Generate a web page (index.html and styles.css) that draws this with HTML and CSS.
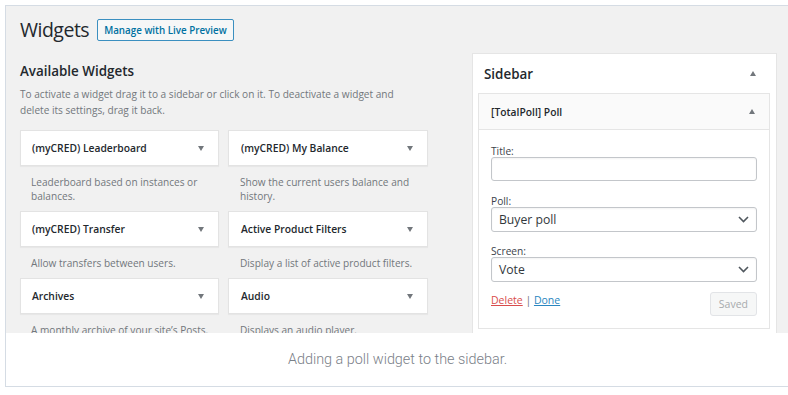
FILE: index.html
```html
<!DOCTYPE html>
<html>
<head>
<meta charset="utf-8">
<link rel="stylesheet" href="styles.css">
</head>
<body>
<figure class="frame">
  <div class="shot">
    <div class="head">
      <h1 class="title">Widgets</h1>
      <span class="live-btn">Manage with Live Preview</span>
    </div>
    <div class="main">
      <div class="available">
        <h2 class="avail-title">Available Widgets</h2>
        <p class="avail-desc">To activate a widget drag it to a sidebar or click on it. To deactivate a widget and delete its settings, drag it back.</p>
        <div class="grid">
          <div class="item">
            <div class="card"><span>(myCRED) Leaderboard</span><i class="down"></i></div>
            <p class="desc">Leaderboard based on instances or balances.</p>
          </div>
          <div class="item">
            <div class="card"><span>(myCRED) My Balance</span><i class="down"></i></div>
            <p class="desc">Show the current users balance and history.</p>
          </div>
          <div class="item">
            <div class="card"><span>(myCRED) Transfer</span><i class="down"></i></div>
            <p class="desc">Allow transfers between users.</p>
          </div>
          <div class="item">
            <div class="card"><span>Active Product Filters</span><i class="down"></i></div>
            <p class="desc">Display a list of active product filters.</p>
          </div>
          <div class="item">
            <div class="card"><span>Archives</span><i class="down"></i></div>
            <p class="desc">A monthly archive of your site’s Posts.</p>
          </div>
          <div class="item">
            <div class="card"><span>Audio</span><i class="down"></i></div>
            <p class="desc">Displays an audio player.</p>
          </div>
        </div>
      </div>
      <div class="sidebar">
        <div class="sb-head"><span>Sidebar</span><i class="up"></i></div>
        <div class="widget">
          <div class="w-head"><span>[TotalPoll] Poll</span><i class="up"></i></div>
          <div class="w-body">
            <label class="lbl">Title:</label>
            <div class="input"></div>
            <label class="lbl">Poll:</label>
            <div class="select"><span>Buyer poll</span><svg width="11" height="7" viewBox="0 0 11 7"><path d="M1 1l4.5 4.5L10 1" fill="none" stroke="#50575e" stroke-width="1.6"/></svg></div>
            <label class="lbl">Screen:</label>
            <div class="select"><span>Vote</span><svg width="11" height="7" viewBox="0 0 11 7"><path d="M1 1l4.5 4.5L10 1" fill="none" stroke="#50575e" stroke-width="1.6"/></svg></div>
            <div class="actions">
              <div class="links"><a class="del">Delete</a> | <a class="done">Done</a></div>
              <span class="saved">Saved</span>
            </div>
          </div>
        </div>
      </div>
    </div>
  </div>
  <figcaption class="caption">Adding a poll widget to the sidebar.</figcaption>
</figure>
</body>
</html>
```
FILE: styles.css
```css
html, body { margin: 0; padding: 0; background: #fff; overflow: hidden; }
body { width: 788px; height: 395px; }
.frame {
  margin: 5px 0 0 5px;
  width: 783px;
  border: 1px solid #d5dce4;
  background: #fff;
}
.shot {
  height: 327px;
  overflow: hidden;
  background: #f1f1f1;
  font-family: "Open Sans", sans-serif;
  color: #23282d;
  padding-top: 13px;
  box-sizing: border-box;
}
.head { display: flex; align-items: center; height: 22px; padding-left: 14px; gap: 8px; }
.title { margin: 0; font-size: 19.5px; font-weight: 400; letter-spacing: -0.5px; line-height: 22px; color: #23282d; }
.live-btn {
  display: flex; align-items: center; height: 20px; padding: 0 6px;
  border: 1px solid #3b8fc0; border-radius: 2px; background: #f6f7f7;
  color: #0071a1; font-size: 9.8px; font-weight: 600;
}
.main { display: flex; margin-top: 12px; }
.available { width: 408px; padding: 8px 0 0 14px; }
.avail-title { margin: 0; font-size: 13.4px; font-weight: 600; line-height: 20px; }
.avail-desc { margin: 5px 0 12px; width: 385px; font-size: 10.1px; line-height: 16px; color: #72777c; }
.grid { display: grid; grid-template-columns: 199px 200px; column-gap: 9px; }
.card {
  height: 36px; box-sizing: border-box; background: #fff; border: 1px solid #e3e3e3;
  display: flex; align-items: center; justify-content: space-between;
  padding: 0 14px 0 11px; font-size: 10.3px; font-weight: 600; color: #23282d;
  box-shadow: 0 1px 1px rgba(0,0,0,0.04);
}
.item:nth-child(even) .card { padding-left: 12px; }
.desc { margin: 9px 0 8px 11px; font-size: 10.1px; line-height: 14px; color: #72777c; padding-right: 6px; }
.item:nth-child(even) .desc { margin-left: 12px; }
.down { width: 0; height: 0; border-left: 3.5px solid transparent; border-right: 3.5px solid transparent; border-top: 5px solid #72777c; }
.up { width: 0; height: 0; border-left: 3.5px solid transparent; border-right: 3.5px solid transparent; border-bottom: 5px solid #72777c; }
.sidebar {
  margin-left: 44px; width: 305px; box-sizing: border-box;
  background: #fff; border: 1px solid #e5e5e5; height: 300px;
}
.sb-head { height: 39px; display: flex; align-items: center; justify-content: space-between; padding: 0 20px 0 11px; font-size: 13.4px; font-weight: 600; }
.widget { margin: 0 6px 0 5px; border: 1px solid #e5e5e5; }
.w-head { height: 35px; display: flex; align-items: center; justify-content: space-between; padding: 0 14px 0 12px; font-size: 10.3px; font-weight: 600; background: #fafafa; border-bottom: 1px solid #e5e5e5; }
.w-body { padding: 15px 12px 12px 12px; display: flex; flex-direction: column; }
.lbl { font-size: 10.2px; line-height: 12px; color: #3c434a; }
.input, .select {
  box-sizing: border-box; border: 1px solid #c3c6ca; border-radius: 3px; background: #fff;
  box-shadow: inset 0 1px 2px rgba(0,0,0,0.05);
}
.input { height: 24px; margin-bottom: 14px; }
.select { height: 25px; margin-bottom: 13px; display: flex; align-items: center; justify-content: space-between; padding: 0 7px 0 7px; font-size: 12.2px; color: #32373c; }
.select:last-of-type { margin-bottom: 0; }
.actions { display: flex; justify-content: space-between; align-items: flex-start; margin-top: -3px; }
.links { font-size: 10.5px; line-height: 16px; color: #72777c; }
.del { color: #d94c4c; text-decoration: underline; }
.done { color: #2a86c0; text-decoration: underline; }
.saved {
  height: 24px; box-sizing: border-box; padding: 0 8px; display: flex; align-items: center;
  border: 1px solid #e2e4e7; border-radius: 3px; background: #f6f7f7; color: #a7aaad; font-size: 10.5px;
}
.caption {
  margin: 0; height: 53px; display: flex; align-items: center; justify-content: center;
  font-family: "Roboto", sans-serif; font-weight: 300; font-size: 14.4px; color: #7a8088;
}
```
